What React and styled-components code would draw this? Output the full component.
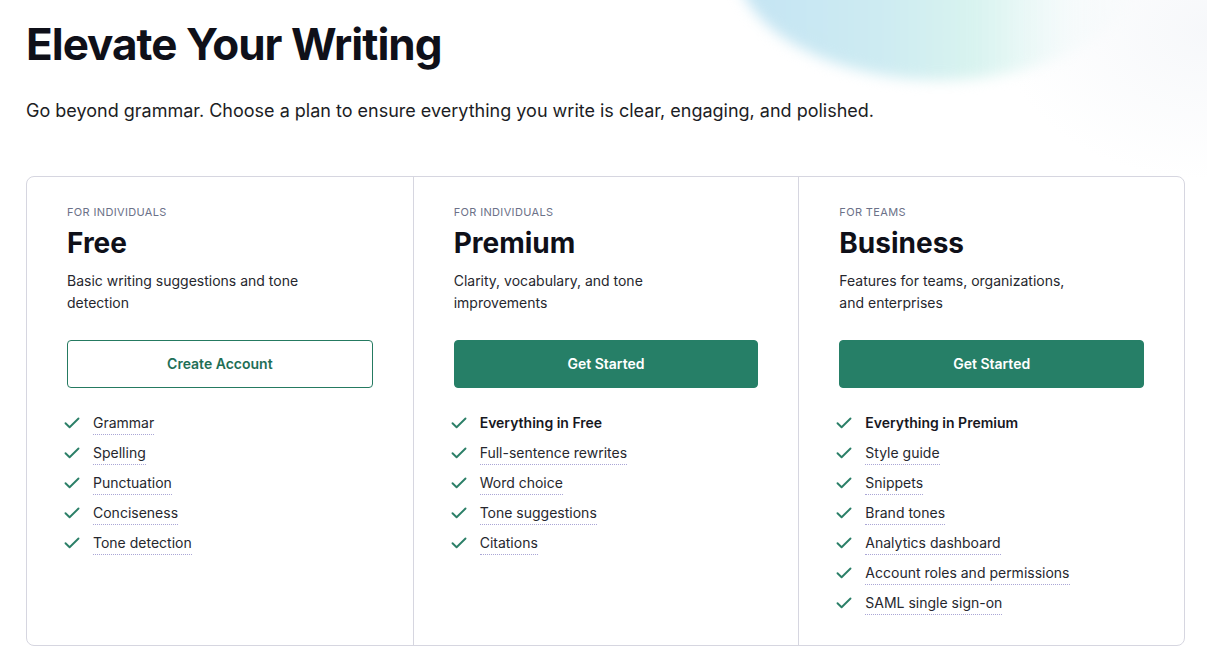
import styled, { createGlobalStyle } from 'styled-components'

const plans = [
  {
    tier: 'For individuals',
    name: 'Free',
    text: 'Basic writing suggestions and tone detection',
    cta: 'Create Account',
    outline: true,
    features: ['Grammar', 'Spelling', 'Punctuation', 'Conciseness', 'Tone detection'],
  },
  {
    tier: 'For individuals',
    name: 'Premium',
    text: 'Clarity, vocabulary, and tone improvements',
    cta: 'Get Started',
    lead: 'Everything in Free',
    features: ['Full-sentence rewrites', 'Word choice', 'Tone suggestions', 'Citations'],
  },
  {
    tier: 'For teams',
    name: 'Business',
    text: 'Features for teams, organizations, and enterprises',
    cta: 'Get Started',
    lead: 'Everything in Premium',
    features: [
      'Style guide',
      'Snippets',
      'Brand tones',
      'Analytics dashboard',
      'Account roles and permissions',
      'SAML single sign-on',
    ],
  },
]

const Check = () => (
  <svg width="16" height="12" viewBox="0 0 16 12" fill="none">
    <path d="M1.5 6.2 L5.6 10.2 L14.5 1.5" stroke="#2b7f67" strokeWidth="1.9" strokeLinecap="round" strokeLinejoin="round" />
  </svg>
)

const App = () => {
  return (
    <Page>
      <GlobalStyle />
      <Title>Elevate Your Writing</Title>
      <Lead>Go beyond grammar. Choose a plan to ensure everything you write is clear, engaging, and polished.</Lead>

      <Plans>
        {plans.map((plan) => (
          <Plan key={plan.name}>
            <Tier>{plan.tier}</Tier>
            <PlanName>{plan.name}</PlanName>
            <PlanText>{plan.text}</PlanText>
            <Cta $outline={plan.outline}>{plan.cta}</Cta>

            <Features>
              {plan.lead && (
                <Feature>
                  <Check />
                  <strong>{plan.lead}</strong>
                </Feature>
              )}
              {plan.features.map((f) => (
                <Feature key={f}>
                  <Check />
                  <span>{f}</span>
                </Feature>
              ))}
            </Features>
          </Plan>
        ))}
      </Plans>
    </Page>
  )
}

export default App

const GlobalStyle = createGlobalStyle`
  body {
    margin: 0;
    background: #fff;
    font-family: Inter, "Liberation Sans", sans-serif;
    color: #1c1d24;
  }
`

const Page = styled.main`
  position: relative;
  overflow: hidden;
  min-height: 660px;
  box-sizing: border-box;
  padding: 15px 22px 0 26px;

  &::before {
    content: '';
    position: absolute;
    left: 735px;
    top: -160px;
    width: 410px;
    height: 240px;
    border-radius: 50%;
    background: linear-gradient(90deg, #c4e4f3 0%, #cdebf2 35%, #d8f3ef 58%, rgba(240, 250, 250, 0.55) 82%, rgba(255, 255, 255, 0) 100%);
    filter: blur(7px);
    z-index: 0;
  }

  &::after {
    content: '';
    position: absolute;
    left: 1000px;
    top: -120px;
    width: 420px;
    height: 300px;
    border-radius: 50%;
    background: radial-gradient(closest-side, rgba(244, 246, 249, 0.8), rgba(255, 255, 255, 0));
    z-index: 0;
  }

  & > * {
    position: relative;
    z-index: 1;
  }
`

const Title = styled.h1`
  margin: 0;
  font-size: 44px;
  font-weight: 700;
  line-height: 58px;
  letter-spacing: -1px;
  color: #0f1019;
`

const Lead = styled.p`
  margin: 27px 0 0;
  font-size: 18px;
  line-height: 22px;
  color: #1c1d24;
`

const Plans = styled.section`
  margin-top: 54px;
  display: grid;
  grid-template-columns: repeat(3, 1fr);
  border: 1px solid #d6d6e0;
  border-radius: 8px;
  background: #fff;
`

const Plan = styled.div`
  padding: 29px 40px 30px;
  display: flex;
  flex-direction: column;

  & + & {
    border-left: 1px solid #d6d6e0;
  }
`

const Tier = styled.div`
  font-size: 11px;
  line-height: 13px;
  text-transform: uppercase;
  letter-spacing: 0.35px;
  color: #6c7188;
`

const PlanName = styled.h2`
  margin: 7px 0 0;
  font-size: 28px;
  line-height: 34px;
  font-weight: 700;
  color: #0f1019;
`

const PlanText = styled.p`
  margin: 10px 0 0;
  max-width: 250px;
  font-size: 14px;
  line-height: 22px;
  color: #26272e;
`

const Cta = styled.button`
  margin-top: 26px;
  height: 48px;
  width: 100%;
  border-radius: 4px;
  border: 1px solid ${(p) => (p.$outline ? '#257a61' : '#267f67')};
  background: ${(p) => (p.$outline ? '#fff' : '#267f67')};
  color: ${(p) => (p.$outline ? '#1f6f56' : '#fff')};
  font-family: inherit;
  font-size: 14px;
  font-weight: 600;
  padding: 0 0 2px;
  cursor: pointer;
`

const Features = styled.ul`
  list-style: none;
  margin: 24px 0 0;
  padding: 0;
  display: flex;
  flex-direction: column;
  gap: 7px;
`

const Feature = styled.li`
  display: flex;
  align-items: flex-start;
  gap: 13px;
  font-size: 14px;
  line-height: 22px;
  color: #26272e;

  svg {
    margin-top: 5px;
    margin-left: -3px;
    flex: none;
  }

  span {
    border-bottom: 1px dotted #aaa6d6;
  }

  strong {
    font-weight: 600;
    color: #17181f;
    padding-bottom: 1px;
  }
`
